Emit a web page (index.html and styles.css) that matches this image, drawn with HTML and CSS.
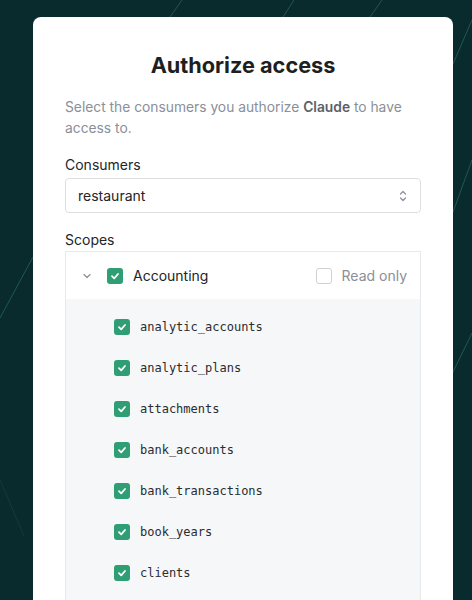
FILE: index.html
```
<!DOCTYPE html>
<html>
<head>
<meta charset="utf-8">
<link rel="stylesheet" href="styles.css">
</head>
<body>
<svg class="bg-lines" width="472" height="600" viewBox="0 0 472 600">
  <g stroke="#2a6b63" stroke-width="1" fill="none" opacity="0.7">
    <line x1="170" y1="17" x2="182" y2="0"/>
    <line x1="283" y1="17" x2="294" y2="0"/>
    <line x1="370" y1="17" x2="382" y2="0"/>
    <line x1="453" y1="64" x2="472" y2="20"/>
    <line x1="453" y1="212" x2="472" y2="160"/>
    <line x1="453" y1="372" x2="472" y2="333"/>
    <line x1="0" y1="318" x2="33" y2="257"/>
  </g>
  <line x1="0" y1="480" x2="24" y2="536" stroke="#1a4a46" stroke-width="1" opacity="0.5"/>
</svg>
<main class="card">
  <h1 class="title">Authorize access</h1>
  <p class="desc">Select the consumers you authorize <b>Claude</b> to have access to.</p>

  <label class="label">Consumers</label>
  <div class="select">
    <span>restaurant</span>
    <svg class="updown" width="10" height="14" viewBox="0 0 10 14"><path d="M2.5 5 L5 2.5 L7.5 5 M2.5 9 L5 11.5 L7.5 9" stroke="#8a8f98" stroke-width="1.2" fill="none" stroke-linecap="round" stroke-linejoin="round"/></svg>
  </div>

  <label class="label scopes-label">Scopes</label>
  <section class="scopes">
    <div class="group-head">
      <svg class="chev" width="10" height="10" viewBox="0 0 10 10"><path d="M2 3.5 L5 6.5 L8 3.5" stroke="#8a8f98" stroke-width="1.2" fill="none" stroke-linecap="round" stroke-linejoin="round"/></svg>
      <span class="cb on"><svg width="10" height="10" viewBox="0 0 10 10"><path d="M2 5.2 L4.2 7.3 L8 3" stroke="#fff" stroke-width="1.8" fill="none" stroke-linecap="round" stroke-linejoin="round"/></svg></span>
      <span class="group-name">Accounting</span>
      <span class="readonly"><span class="cb off"></span>Read only</span>
    </div>
    <ul class="items">
      <li><span class="cb on"><svg width="10" height="10" viewBox="0 0 10 10"><path d="M2 5.2 L4.2 7.3 L8 3" stroke="#fff" stroke-width="1.8" fill="none" stroke-linecap="round" stroke-linejoin="round"/></svg></span>analytic_accounts</li>
      <li><span class="cb on"><svg width="10" height="10" viewBox="0 0 10 10"><path d="M2 5.2 L4.2 7.3 L8 3" stroke="#fff" stroke-width="1.8" fill="none" stroke-linecap="round" stroke-linejoin="round"/></svg></span>analytic_plans</li>
      <li><span class="cb on"><svg width="10" height="10" viewBox="0 0 10 10"><path d="M2 5.2 L4.2 7.3 L8 3" stroke="#fff" stroke-width="1.8" fill="none" stroke-linecap="round" stroke-linejoin="round"/></svg></span>attachments</li>
      <li><span class="cb on"><svg width="10" height="10" viewBox="0 0 10 10"><path d="M2 5.2 L4.2 7.3 L8 3" stroke="#fff" stroke-width="1.8" fill="none" stroke-linecap="round" stroke-linejoin="round"/></svg></span>bank_accounts</li>
      <li><span class="cb on"><svg width="10" height="10" viewBox="0 0 10 10"><path d="M2 5.2 L4.2 7.3 L8 3" stroke="#fff" stroke-width="1.8" fill="none" stroke-linecap="round" stroke-linejoin="round"/></svg></span>bank_transactions</li>
      <li><span class="cb on"><svg width="10" height="10" viewBox="0 0 10 10"><path d="M2 5.2 L4.2 7.3 L8 3" stroke="#fff" stroke-width="1.8" fill="none" stroke-linecap="round" stroke-linejoin="round"/></svg></span>book_years</li>
      <li><span class="cb on"><svg width="10" height="10" viewBox="0 0 10 10"><path d="M2 5.2 L4.2 7.3 L8 3" stroke="#fff" stroke-width="1.8" fill="none" stroke-linecap="round" stroke-linejoin="round"/></svg></span>clients</li>
    </ul>
  </section>
</main>
</body>
</html>
```
FILE: styles.css
```
html, body {
  margin: 0;
  padding: 0;
  height: 600px;
  overflow: hidden;
}
body {
  background: #0a2b2e;
  font-family: Inter, "Noto Sans", sans-serif;
  color: #222428;
  position: relative;
}
.bg-lines {
  position: absolute;
  left: 0;
  top: 0;
}
.card {
  position: relative;
  margin: 17px 0 0 33px;
  width: 420px;
  height: 620px;
  background: #fff;
  border-radius: 8px;
  padding: 34px 32px 0;
  box-sizing: border-box;
  overflow: hidden;
}
.title {
  margin: 0;
  text-align: center;
  font-size: 21.7px;
  font-weight: 700;
  line-height: 28px;
  color: #1e1f22;
}
.desc {
  margin: 18px 0 0;
  font-size: 13.8px;
  line-height: 21px;
  color: #8a8f98;
}
.desc b {
  font-weight: 600;
  color: #5c6169;
}
.label {
  display: block;
  margin-top: 16px;
  font-size: 14px;
  line-height: 20px;
  color: #222428;
}
.select {
  margin-top: 3px;
  height: 35px;
  box-sizing: border-box;
  border: 1px solid #dcdee2;
  border-radius: 4px;
  display: flex;
  align-items: center;
  justify-content: space-between;
  padding: 0 12px 0 12px;
  font-size: 14px;
}
.scopes-label {
  margin-top: 17px;
}
.scopes {
  margin-top: 1px;
  border: 1px solid #e8e9ec;
  border-bottom: none;
}
.group-head {
  height: 47px;
  display: flex;
  align-items: center;
  padding: 0 13px 0 16px;
  font-size: 14px;
}
.chev {
  margin-right: 15px;
}
.cb {
  width: 16px;
  height: 16px;
  border-radius: 3px;
  box-sizing: border-box;
  display: inline-flex;
  align-items: center;
  justify-content: center;
  flex: none;
}
.cb.on {
  background: #2f9e74;
}
.cb.off {
  border: 1px solid #cfd2d7;
  background: #fff;
}
.group-name {
  margin-left: 10px;
}
.readonly {
  margin-left: auto;
  display: flex;
  align-items: center;
  gap: 10px;
  color: #8a8f98;
}
.items {
  list-style: none;
  margin: 0;
  padding: 7px 0 40px 48px;
  background: #f6f7f9;
}
.items li {
  height: 41px;
  display: flex;
  align-items: center;
  gap: 10px;
  font-family: "DejaVu Sans Mono", monospace;
  font-size: 12px;
  color: #2a2c30;
}
```
